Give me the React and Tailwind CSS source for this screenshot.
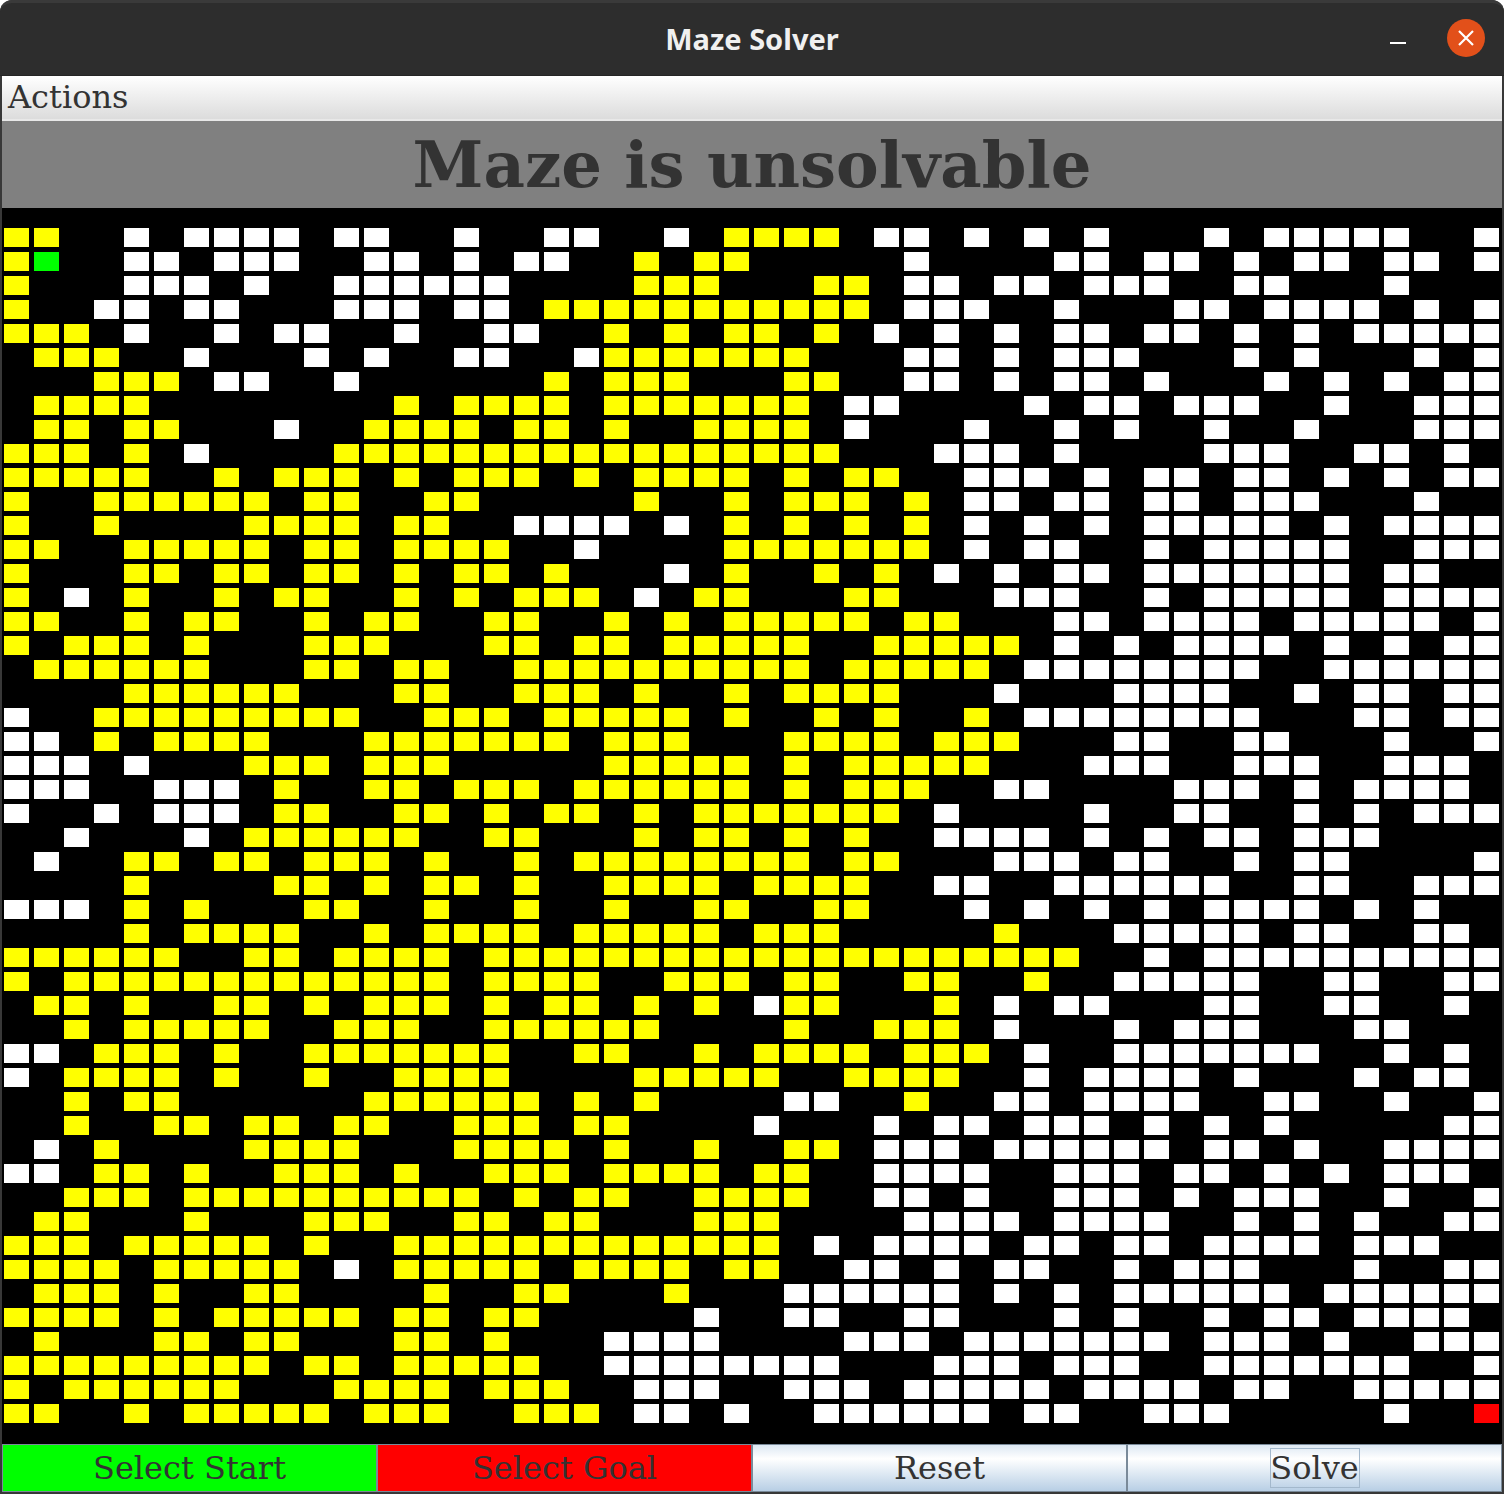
const LEFT = [
  "YY..W.WWWW.WW..W.","YG..WW.WWW..WW.W.","Y...WWW.W..WWWWWW","Y..WW.WW...WWW.WW","YYY.W..W.WW..W..W",
  ".YYY..W...W.W..WW","...YYY.WW..W.....",".YYYY........Y.YY",".YY.YY...W..YYYY.","YYY.Y.W....YYYYYY",
  "YYYYY..Y.YYY.Y.YY","Y..YYYYYY.YY..YY.","Y..Y....YYYY.YY..","YY..YYYYY.YY.YYYY","Y...YY.YY.YY.Y.YY",
  "Y.W.Y..Y.YY..Y.Y.","YY..Y.YY..Y.YY..Y","Y.YYY.Y...YYY...Y",".YYYYYY...YY.YY..","....YYYYYY...YY..",
  "W..YYYYYYYYY..YYY","WW.Y.YYYY...YYYYY","WWW.W...YYY.YYY..","WWW..WWW.Y..YY.YY","W..W.WWW.YY..YY.Y",
  "..W...W.YYYYYY..Y",".W..YY.YY.YYY.Y..","....Y....YY.Y.YY.","WWW.Y.Y...YY..Y..","....Y.YYYY..Y.YYY",
  "YYYYYY..YY.YYYY.Y","Y.YYYYYYYYYYYYY.Y",".YY.Y..YY.Y.YYY.Y","..Y.YYYYY..YYY..Y","WW.YYY.Y..YYYYYYY",
  "W.YYYY.Y..Y..YYYY","..Y.YY......YYYYY","..Y..YY.YY.YY..YY",".W.Y....YYYY...YY","WW.YY.Y..YYY.Y..Y",
  "..YYY.YYYYYYYYYY.",".YY...Y...YYY..YY","YYY.YYYYY.Y..YYYY","YYYY.YYYYY.W.YYYY",".YYY.Y..YY....Y..",
  "YYYY.Y.YYYYY.YY.Y",".Y...YY.YY...YY.Y","YYYYYYYYY.YY.YYYY","Y.YYYYYY...YYYY.Y","YY..Y.YYYYY.YYY..",
];
const MID = [
  ".WW..W.YYYY.WW.W.","WW..Y.YY.....W...","....YYY...YY.WW.W",".YYYYYYYYYYY.WWW.","W..Y.Y.YY.Y.W.W.W",
  "..WYYYYYYY...WW.W",".Y.YYY...YY..WW.W","YY.YYYYYYY.WW....","YY.Y..YYYY.W...W.","YYYYYYYYYYY...WWW",
  "Y.Y.YYYY.Y.YY..WW","....Y..Y.YYY.Y.WW","WWWW.W.Y.Y.Y.Y.W.","..W....YYYYYYY.W.",".Y...W.Y..Y.Y.W.W",
  "YYY.W.YY...YY...W","Y..Y.Y.YYYYY.YY..","Y.YY.YYYYY..YYYYY","YYYYYYYYYY.YYYYY.","YYY.Y..Y.YYYY...W",
  ".YYYYY.Y..Y.Y..Y.","YY.YYY...YYYY.YYY","...YYYYY.Y.YYYYY.","Y.YYYYYY.Y.YYY..W",".YY.Y.YYYYYYY.W..",
  "Y...Y.YY.Y.Y..WWW","Y.YYYYYYYY.YY...W","Y..YYYY.YYYY..WW.","Y..Y..YY..YY...W.","Y.YYYYY.YYY.....Y",
  "YYYYYYYYYYYYYYYYY","YYY..YYY.YY..YY..",".YY.Y.Y.WYY...Y.W","YYYYY....Y..YYY.W","..YY..Y.YYYY.YYY.",
  "....YYYYY..YYYY..","Y.Y.Y....WW..Y..W","Y.YY....W...W.WW.","YY.Y..Y..YY.WWW.W","YY.YYYY.YY..WWWW.",
  "Y.YY..YYYY..WW.W.",".YY...YYY....WWWW","YYYYYYYYY.W.WWWW.","Y.YYYY.YY..WW.W.W","YY...Y...WWWWWW.W",
  "Y.....W..WW..WW..","...WWWW....WWW.WW","Y..WWWWWWWW...WWW","YY..WWW..WWW.WWWW","YYY.WW.W..WWWWWW.",
];
const RIGHT = [
  "W.W...W.WWWWW..W",".WW.WW.W.WW.WW.W","W.WWW..WW...W...",".W...WW.WWWW.W.W",".WW.WW.W.W.WWWWW",
  ".WWW...W.W...W.W",".WW.W...W.W.W.WW","W.WW.WWW..W..WWW",".W.W..W..W...WWW",".W....WWW..WW.W.",
  "W.W.WW.WW.W.W.WW",".WW.WW.WWW...W..","W.W.WWWWW.W.WWWW","WW..W.WWWWW..WWW",".WW.WWWWWWW.WW..",
  "WW..W.WWWWW.WWWW",".WW.WWWW.WWWWW.W",".W.W.WWWW.W.W.WW","WWWWWWWW..WWWWWW","...WWWW..W.WW.WW",
  "WWWWWWWW...WW.WW","...WW..WW...W..W","..WWW..WWW..WWW.","W....WWW.W.WWWW.","..W..WW..W.W.WWW",
  "W.W.W.WW.WWW....","WW.WW..W.WW....W",".WWWWWW..WW..WWW","W.W.W.WWWW.W.W..","...WWWWW.WW..WW.",
  "YY..W.WWWWWWWWWW","Y..WWWWW..WW..WW",".WW...WW..WW..W.","...W.WWW...WW...","W..WWWWWWW..W.W.",
  "W.WWWW.W...W.WW.","W.WWWW..WW..W..W","WWW.W.W.W.....WW","WWWWW.WW.W..WWWW",".WWW.WW.W.W.WWW.",
  ".WWW.W.WWW..W..W",".WWWW..W.W.W..WW","WW.WW.WWWW.WWW..","W..W.WWW...W..WW",".W.WWWWWW.WWWWWW",
  ".W.W..W.WW.WWWW.","WWWWW.WWW.W..WWW",".WWW..WWWWWWW..W","W.WWWW.WW..WWWWW","WW..WWW.....W..R",
];

const CELL = {
  Y: "bg-[#ffff00]",
  W: "bg-white",
  G: "bg-[#00ff00]",
  R: "bg-[#ff0000]",
  ".": "bg-black",
};

const cells = LEFT.flatMap((row, r) => (row + MID[r] + RIGHT[r]).split(""));

function Maze() {
  return (
    <div className="flex-1 bg-black pl-[2px] pt-[20px]">
      <div className="grid grid-cols-[repeat(50,25px)] auto-rows-[19px] gap-x-[5px] gap-y-[5px]">
        {cells.map((c, i) => (
          <div key={i} className={CELL[c]} />
        ))}
      </div>
    </div>
  );
}

function TitleBar() {
  return (
    <div className="relative h-[76px] shrink-0 flex items-center justify-center rounded-t-[12px] bg-[#2d2d2d] border-t-[3px] border-[#3a3a3a] border-b border-b-[#252525] -mx-[2px]">
      <span className="font-['Noto_Sans',sans-serif] font-bold text-[29px] leading-none text-[#f0f0f0] -mt-[1px]">
        Maze Solver
      </span>
      <div className="absolute left-[1390px] top-[39px] w-[16px] h-[2px] bg-white" />
      <div className="absolute left-[1447px] top-[16px] w-[38px] h-[38px] rounded-full bg-[#e2501a] flex items-center justify-center">
        <svg width="18" height="18" viewBox="0 0 18 18" fill="none" stroke="white" strokeWidth="2.2">
          <path d="M2 2 L16 16 M16 2 L2 16" />
        </svg>
      </div>
    </div>
  );
}

function MenuBar() {
  return (
    <div className="h-[45px] shrink-0 flex items-center pl-[6px] pb-[2px] bg-gradient-to-b from-white to-[#dcdcdc] border-b-[2px] border-[#e8e8e8] font-['DejaVu_Serif',serif] text-[32px] leading-none text-[#333333]">
      Actions
    </div>
  );
}

function Status() {
  return (
    <div className="h-[87px] shrink-0 flex items-center justify-center bg-[#808080] font-['DejaVu_Serif',serif] font-bold text-[64px] leading-none text-[#333333]">
      Maze is unsolvable
    </div>
  );
}

function Btn({ className, children }) {
  return (
    <div className={`flex-1 flex items-center justify-center border-y border-x border-[#7a8a99] ${className}`}>
      {children}
    </div>
  );
}

const METAL = "bg-gradient-to-b from-[#dde8f3] via-white via-30% to-[#b8cfe5]";

function Buttons() {
  return (
    <div className="h-[48px] shrink-0 flex font-['DejaVu_Serif',serif] text-[32px] leading-none text-[#333333]">
      <Btn className="bg-[#00ff00]">Select Start</Btn>
      <Btn className="bg-[#ff0000]">Select Goal</Btn>
      <Btn className={METAL}>Reset</Btn>
      <Btn className={METAL}>
        <span className="flex items-center justify-center h-[40px] w-[90px] border border-[#a3b8cc]">Solve</span>
      </Btn>
    </div>
  );
}

export default function App() {
  return (
    <div className="w-[1504px] h-[1494px] bg-white overflow-hidden">
      <div className="w-full h-full flex flex-col px-[2px] pb-[2px] bg-[#383838] rounded-t-[12px]">
        <TitleBar />
        <MenuBar />
        <Status />
        <Maze />
        <Buttons />
      </div>
    </div>
  );
}
